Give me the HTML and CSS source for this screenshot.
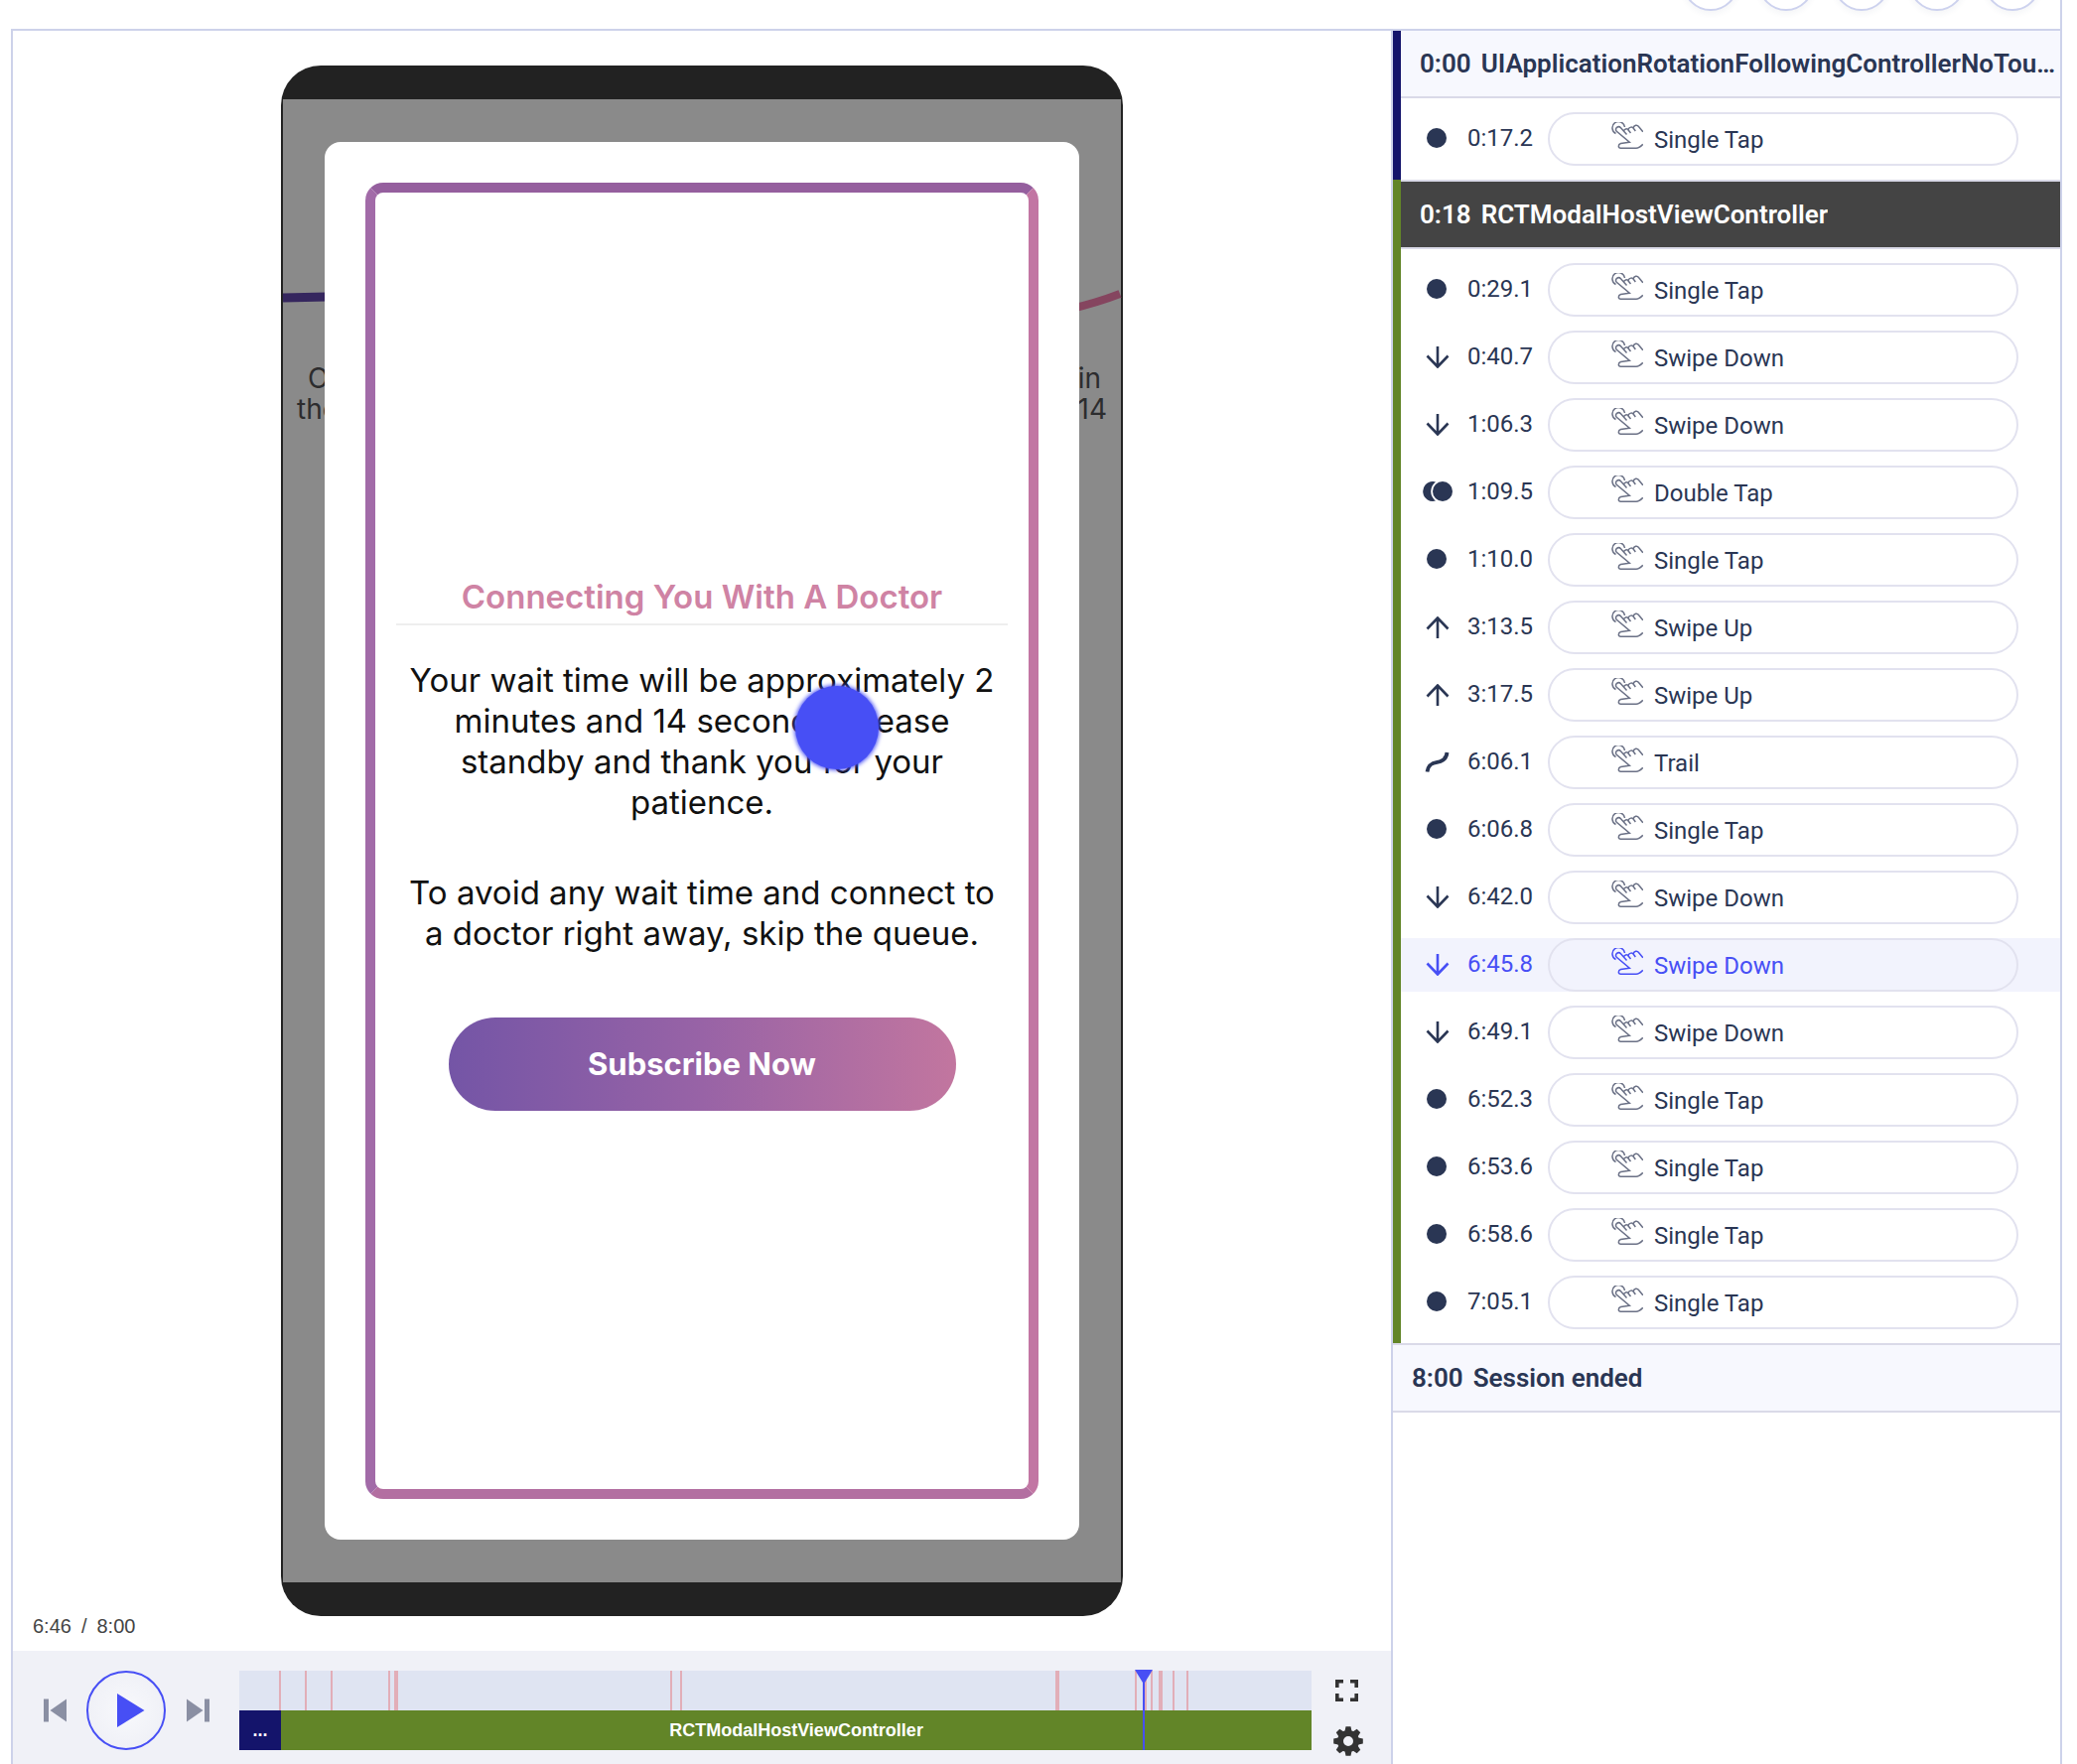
FILE: index.html
```html
<!DOCTYPE html>
<html lang="en">
<head>
<meta charset="utf-8">
<title>Session replay</title>
<link rel="stylesheet" href="styles.css">
</head>
<body>
<svg class="sprite" aria-hidden="true">
  <symbol id="i-tap" viewBox="0 0 30 22"><circle cx="14" cy="10" r="10" fill="currentColor"/></symbol>
  <symbol id="i-double" viewBox="0 0 30 22"><path d="M10 0a10 10 0 0 1 3 .4a12 12 0 0 0 0 19.200A10 10 0 1 1 10 0z" fill="currentColor"/><circle cx="20" cy="10" r="10" fill="currentColor"/></symbol>
  <symbol id="i-down" viewBox="0 0 30 22"><path d="M15 0v21M4.500 9.500 15 20.500 25.500 9.500" fill="none" stroke="currentColor" stroke-width="2.600"/></symbol>
  <symbol id="i-up" viewBox="0 0 30 22"><path d="M15 22V1M4.500 12.500 15 1.500 25.500 12.500" fill="none" stroke="currentColor" stroke-width="2.600"/></symbol>
  <symbol id="i-trail" viewBox="0 0 30 22"><path d="M4.500 20.500C5.500 13 10 11.500 14.500 10.800S24 8.500 24.500 1" fill="none" stroke="currentColor" stroke-width="3.800"/></symbol>
  <symbol id="i-hand" viewBox="0 0 32 34"><path d="M4.500 11.500A6.300 6.300 0 1 1 13.500 5M15.500 12.500 9.500 5.800C7 3 2.800 6.500 5.300 9.300L18.300 20.300L9.500 21.500C6.500 22.500 6.700 26.200 9.500 26.200H25C28 26.200 30 24.200 31.800 22.300M12.500 9.200C13 6.800 15.800 5.800 17.300 8.300L19.500 11M17 7.500C18.200 4.500 21.200 4.500 22.500 6.500L24.300 9M22 6C23 2.800 26 2.400 27.500 4.500L31.800 9.800" fill="none" stroke="currentColor" stroke-width="1.500"/></symbol>
</svg>

<header class="toolbar">
  <button class="round" aria-label="Tool 1"></button>
  <button class="round" aria-label="Tool 2"></button>
  <button class="round" aria-label="Tool 3"></button>
  <button class="round" aria-label="Tool 4"></button>
  <button class="round" aria-label="Tool 5"></button>
</header>

<main class="replay">
  <section class="player">
    <div class="stage">
      <p class="clock"><span>6:46</span><span>/</span><span>8:00</span></p>
      <div class="phone">
        <div class="screen">
          <div class="behind">
            <svg class="wave" viewBox="0 0 844 20" preserveAspectRatio="none" aria-hidden="true">
              <path d="M0 10 44 9" fill="none" stroke="#35265e" stroke-width="9"/>
              <path d="M790 22 Q820 15 843 6" fill="none" stroke="#85455f" stroke-width="8"/>
            </svg>
            <p class="behind-line behind-short"><span>On</span><span>in</span></p>
            <p class="behind-line"><span>the</span><span>14</span></p>
          </div>
          <div class="modal">
            <div class="frame">
              <h1 class="title">Connecting You With A Doctor</h1>
              <p class="copy">Your wait time will be approximately 2<br>minutes and 14 seconds. Please<br>standby and thank you for your<br>patience.</p>
              <p class="copy">To avoid any wait time and connect to<br>a doctor right away, skip the queue.</p>
              <button class="subscribe">Subscribe Now</button>
              <span class="touch"></span>
            </div>
          </div>
        </div>
      </div>
    </div>

    <div class="controls">
      <button class="icon-btn" aria-label="Previous"><svg width="23" height="24" viewBox="0 0 23 24"><path d="M0 .5h5v23H0zM23 .5v23L6.500 12z" fill="#8a8fa3"/></svg></button>
      <button class="play" aria-label="Play"><svg width="28" height="34" viewBox="0 0 28 34"><path d="M0 0 27.500 17 0 34z" fill="#474ff5"/></svg></button>
      <button class="icon-btn" aria-label="Next"><svg width="24" height="24" viewBox="0 0 24 24"><path d="M1 .5 17.500 12 1 23.500zM19 .5h5v23h-5z" fill="#8a8fa3"/></svg></button>
      <div class="timeline">
        <svg class="track" viewBox="0 0 1080 40" preserveAspectRatio="none" aria-hidden="true">
          <path d="M40 0h2v40h-2zM66 0h2v40h-2zM92 0h2v40h-2zM150 0h2v40h-2zM156 0h4v40h-4zM434 0h2v40h-2zM444 0h2v40h-2zM822 0h4v40h-4zM902 0h2v40h-2zM912 0h2v40h-2zM918 0h2v40h-2zM926 0h4v40h-4zM940 0h2v40h-2zM954 0h2v40h-2z" fill="#e2aeb8"/>
        </svg>
        <div class="segments">
          <span class="segment segment-navy" style="width:3.9%">...</span>
          <span class="segment segment-green">RCTModalHostViewController</span>
        </div>
        <svg class="playhead" style="left:84.35%" width="18" height="81" viewBox="0 0 18 81" aria-hidden="true"><path d="M0 0h18L10 13v68H8V13z" fill="#474ff5"/></svg>
      </div>
      <div class="side-btns">
        <button class="icon-btn" aria-label="Full screen"><svg width="30" height="22" viewBox="0 0 30 22"><path d="M3.800 8V1.800H10M17 1.800H23.200V8M23.200 14V20.200H17M10 20.200H3.800V14" fill="none" stroke="#333" stroke-width="3.600"/></svg></button>
        <button class="icon-btn" aria-label="Settings"><svg width="30" height="30" viewBox="-15 -15 30 30"><g fill="#333"><path fill-rule="evenodd" d="M0-11A11 11 0 1 1 0 11 11 11 0 1 1 0-11zM0-5A5 5 0 1 0 0 5 5 5 0 1 0 0-5z"/><g id="teeth"><path d="M-3.500-10-2.500-14.800H2.500L3.500-10zM-3.500 10-2.500 14.800H2.500L3.500 10zM-10-3.500-14.800-2.500V2.500L-10 3.500zM10-3.500 14.800-2.500V2.500L10 3.500z"/></g><use href="#teeth" transform="rotate(45)"/></g></svg></button>
      </div>
    </div>
  </section>

  <aside class="events">
    <section class="group group-navy">
      <div class="group-body">
        <h2 class="head"><time>0:00</time><span class="name">UIApplicationRotationFollowingControllerNoTou…</span></h2>
        <ul class="list">
          <li class="event"><svg class="mark"><use href="#i-tap"/></svg><time>0:17.2</time><button class="pill"><svg class="hand"><use href="#i-hand"/></svg>Single Tap</button></li>
        </ul>
      </div>
    </section>
    <section class="group group-green">
      <div class="group-body">
        <h2 class="head head-dark"><time>0:18</time><span class="name">RCTModalHostViewController</span></h2>
        <ul class="list">
          <li class="event"><svg class="mark"><use href="#i-tap"/></svg><time>0:29.1</time><button class="pill"><svg class="hand"><use href="#i-hand"/></svg>Single Tap</button></li>
          <li class="event"><svg class="mark"><use href="#i-down"/></svg><time>0:40.7</time><button class="pill"><svg class="hand"><use href="#i-hand"/></svg>Swipe Down</button></li>
          <li class="event"><svg class="mark"><use href="#i-down"/></svg><time>1:06.3</time><button class="pill"><svg class="hand"><use href="#i-hand"/></svg>Swipe Down</button></li>
          <li class="event"><svg class="mark"><use href="#i-double"/></svg><time>1:09.5</time><button class="pill"><svg class="hand"><use href="#i-hand"/></svg>Double Tap</button></li>
          <li class="event"><svg class="mark"><use href="#i-tap"/></svg><time>1:10.0</time><button class="pill"><svg class="hand"><use href="#i-hand"/></svg>Single Tap</button></li>
          <li class="event"><svg class="mark"><use href="#i-up"/></svg><time>3:13.5</time><button class="pill"><svg class="hand"><use href="#i-hand"/></svg>Swipe Up</button></li>
          <li class="event"><svg class="mark"><use href="#i-up"/></svg><time>3:17.5</time><button class="pill"><svg class="hand"><use href="#i-hand"/></svg>Swipe Up</button></li>
          <li class="event"><svg class="mark"><use href="#i-trail"/></svg><time>6:06.1</time><button class="pill"><svg class="hand"><use href="#i-hand"/></svg>Trail</button></li>
          <li class="event"><svg class="mark"><use href="#i-tap"/></svg><time>6:06.8</time><button class="pill"><svg class="hand"><use href="#i-hand"/></svg>Single Tap</button></li>
          <li class="event"><svg class="mark"><use href="#i-down"/></svg><time>6:42.0</time><button class="pill"><svg class="hand"><use href="#i-hand"/></svg>Swipe Down</button></li>
          <li class="event event-active"><svg class="mark"><use href="#i-down"/></svg><time>6:45.8</time><button class="pill"><svg class="hand"><use href="#i-hand"/></svg>Swipe Down</button></li>
          <li class="event"><svg class="mark"><use href="#i-down"/></svg><time>6:49.1</time><button class="pill"><svg class="hand"><use href="#i-hand"/></svg>Swipe Down</button></li>
          <li class="event"><svg class="mark"><use href="#i-tap"/></svg><time>6:52.3</time><button class="pill"><svg class="hand"><use href="#i-hand"/></svg>Single Tap</button></li>
          <li class="event"><svg class="mark"><use href="#i-tap"/></svg><time>6:53.6</time><button class="pill"><svg class="hand"><use href="#i-hand"/></svg>Single Tap</button></li>
          <li class="event"><svg class="mark"><use href="#i-tap"/></svg><time>6:58.6</time><button class="pill"><svg class="hand"><use href="#i-hand"/></svg>Single Tap</button></li>
          <li class="event"><svg class="mark"><use href="#i-tap"/></svg><time>7:05.1</time><button class="pill"><svg class="hand"><use href="#i-hand"/></svg>Single Tap</button></li>
        </ul>
      </div>
    </section>
    <h2 class="head head-end"><time>8:00</time><span class="name">Session ended</span></h2>
  </aside>
</main>
</body>
</html>
```
FILE: styles.css
```css
* { box-sizing: border-box; }

body {
  margin: 0;
  min-height: 100vh;
  display: flex;
  flex-direction: column;
  background: #fff;
  color: #2a3654;
  font: 24px/28px Roboto, sans-serif;
}

h1, h2, p, ul { margin: 0; padding: 0; list-style: none; }

button {
  margin: 0;
  padding: 0;
  border: 0;
  background: none;
  color: inherit;
  font: inherit;
  cursor: pointer;
}

svg { display: block; flex: none; }

.sprite { position: absolute; width: 0; height: 0; }

/* Top tool buttons */
.toolbar {
  height: 29px;
  margin: 0 15px 0 11px;
  padding: 0 20px 18px;
  border-right: 2px solid #cdd2ea;
  display: flex;
  justify-content: flex-end;
  align-items: flex-end;
  gap: 20px;
}

.round {
  width: 56px;
  height: 56px;
  border: 2px solid #cdd2ee;
  border-radius: 50%;
  background: #fff;
  box-shadow: 0 3px 6px rgba(40, 50, 90, .05);
}

.replay {
  flex: 1;
  margin: 0 15px 0 11px;
  border: 2px solid #cdd2ea;
  border-bottom: 0;
  display: grid;
  grid-template-columns: minmax(0, 1388fr) minmax(0, 674fr);
}

/* Player */
.player { display: flex; flex-direction: column; }

.stage {
  flex: 1;
  padding: 35px 0;
  display: grid;
  grid-template-columns: 1fr minmax(0, 848px) 1fr;
}

.clock {
  align-self: end;
  margin: 0 0 -22px 20px;
  display: flex;
  gap: 10px;
  color: #444;
  font: 20px/24px "Liberation Sans", Arial, sans-serif;
}

.phone {
  grid-column: 2;
  padding: 34px 2px;
  border-radius: 40px;
  background: #222;
  display: flex;
}

.screen {
  flex: 1;
  position: relative;
  padding: 43px 42px;
  background: #8a8a8a;
  display: flex;
}

.behind {
  position: absolute;
  inset: 190px 0 auto;
  color: #2c2c2e;
  font: 28px/31px Inter, sans-serif;
}

.wave {
  width: 100%;
  height: 20px;
  margin-bottom: 56px;
  overflow: visible;
}

.behind-line {
  padding: 0 14px;
  display: flex;
  justify-content: space-between;
}

.behind-short { padding: 0 20px 0 25px; }

.modal {
  flex: 1;
  position: relative;
  padding: 41px;
  border-radius: 16px;
  background: #fff;
  display: flex;
}

.frame {
  flex: 1;
  position: relative;
  border: 10px solid;
  border-color: #955f9e #c276a3 #b36fa1 #a26ba8;
  border-radius: 18px;
  padding: 6px 21px 0;
  display: flex;
  flex-direction: column;
  justify-content: center;
  align-items: center;
  color: #111;
  text-align: center;
}

.title {
  align-self: stretch;
  margin-bottom: 35px;
  padding-bottom: 7px;
  border-bottom: 2px solid #eee;
  color: #cf83a4;
  font: 600 33px/40px Inter, sans-serif;
}

.copy {
  margin-bottom: 50px;
  font: 33px/41px Inter, sans-serif;
  white-space: nowrap;
}

.subscribe {
  width: 511px;
  max-width: 100%;
  height: 94px;
  margin-top: 14px;
  border-radius: 47px;
  background: linear-gradient(90deg, #7455a6, #9863a6 50%, #c2769f);
  color: #fff;
  font: 700 31px/40px Inter, sans-serif;
}

.touch {
  position: absolute;
  left: 423px;
  top: 497px;
  width: 84px;
  height: 84px;
  border-radius: 50%;
  background: #474ff5;
  box-shadow: 0 0 4px 1px #474ff5;
}

/* Playback controls */
.controls {
  padding: 20px 28px 8px 31px;
  background: #f0f1f7;
  display: flex;
  align-items: flex-start;
}

.controls > .icon-btn { height: 80px; }

.play {
  width: 80px;
  height: 80px;
  margin: 0 20px;
  padding-left: 29px;
  border: 2px solid #474ff5;
  border-radius: 50%;
  background: radial-gradient(#f8f9fc, #f0f1f7 70%);
}

.timeline {
  flex: 1;
  position: relative;
  margin: 0 22px 0 30px;
}

.track { width: 100%; height: 40px; background: #dfe4f2; }

.segments { display: flex; height: 40px; }

.segment {
  overflow: hidden;
  color: #fff;
  font: 700 18px/40px "Liberation Sans", Arial, sans-serif;
  text-align: center;
}

.segment-navy { background: #14146b; }
.segment-green { flex: 1; background: #628528; }

.playhead {
  position: absolute;
  top: -1px;
  margin-left: -9px;
}

.side-btns {
  padding-top: 9px;
  display: flex;
  flex-direction: column;
  gap: 25px;
}

/* Event list */
.events { border-left: 2px solid #cdd2ea; }

.group { padding-left: 8px; }
.group-navy { background: #14146b; }
.group-green { background: #628528; }
.group-body { background: #fff; }

.head {
  height: 68px;
  padding: 0 2px 0 19px;
  border-bottom: 2px solid #dadae8;
  background: #f7f8fe;
  display: flex;
  gap: 10px;
  font: 600 26px/66px Roboto, sans-serif;
}

.name {
  overflow: hidden;
  text-overflow: ellipsis;
  white-space: nowrap;
}

.head-dark {
  height: 70px;
  border-top: 2px solid #dadae8;
  background: #444;
  color: #fff;
}

.head-end { height: 70px; border-top: 2px solid #dadae8; }

.list {
  padding: 14px 0;
  display: grid;
  gap: 14px;
}

.event {
  padding: 0 42px 0 22px;
  display: grid;
  grid-template-columns: 45px 81px 1fr;
  align-items: center;
}

.event > time { padding-bottom: 2px; }

.mark { width: 30px; height: 22px; }

.pill {
  height: 54px;
  padding: 2px 0 0 62px;
  border: 2px solid #e2e2ef;
  border-radius: 27px;
  display: flex;
  align-items: center;
  gap: 11px;
}

.hand {
  width: 32px;
  height: 34px;
  margin-bottom: 2px;
  color: #6b7186;
}

.event-active { background: #f2f3fd; color: #474ff5; }
.event-active .hand { color: #474ff5; }
```
